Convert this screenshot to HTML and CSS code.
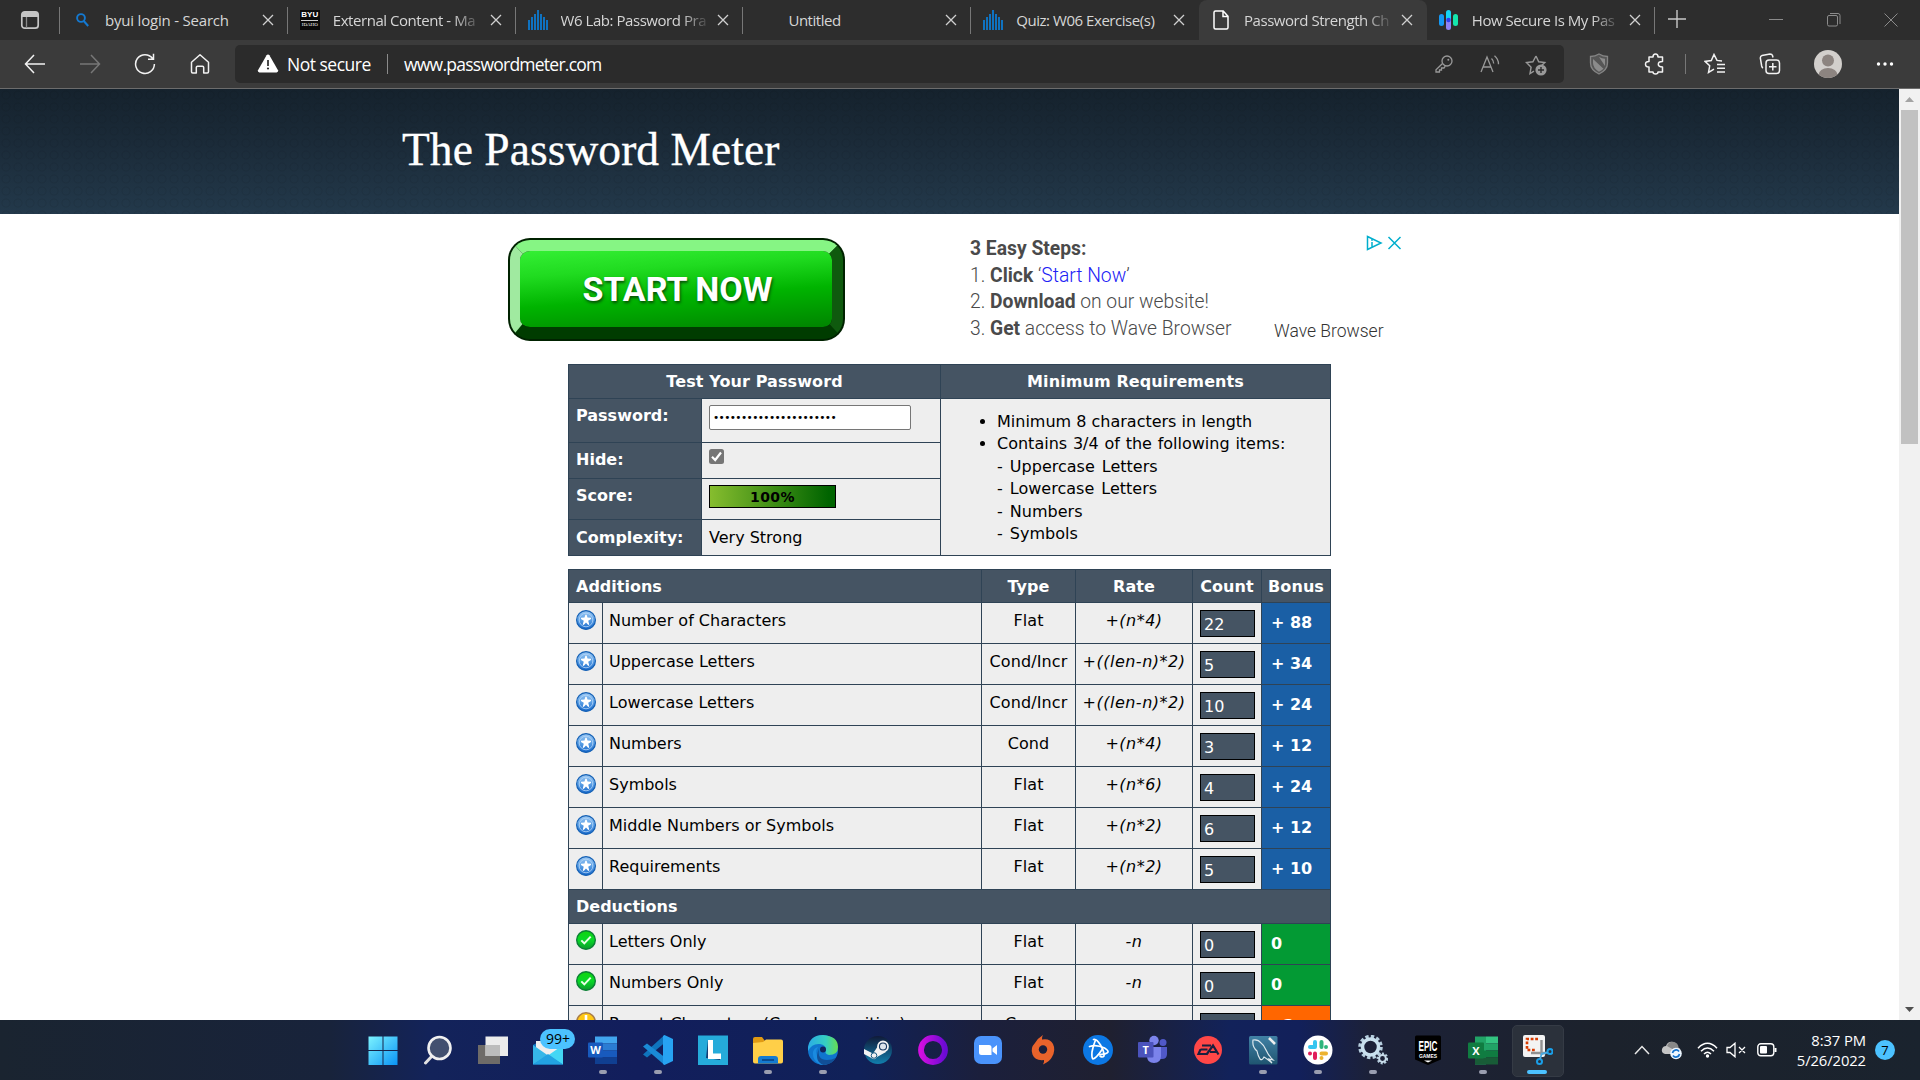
FILE: index.html
```html
<!DOCTYPE html>
<html lang="en">
<head>
<meta charset="utf-8">
<title>Password Strength Checker</title>
<link rel="stylesheet" href="styles.css">
</head>
<body>
<svg width="0" height="0" class="defs">
  <defs>
    <linearGradient id="blueBall" x1="0" y1="0" x2="0" y2="1"><stop offset="0" stop-color="#9cc8f2"/><stop offset=".5" stop-color="#5ba0e6"/><stop offset="1" stop-color="#1465c8"/></linearGradient>
    <linearGradient id="greenBall" x1="0" y1="0" x2="0" y2="1"><stop offset="0" stop-color="#0fd40f"/><stop offset=".5" stop-color="#08d828"/><stop offset="1" stop-color="#0a9a2c"/></linearGradient>
    <symbol id="star" viewBox="0 0 20 20"><circle cx="10" cy="10" r="9.4" fill="url(#blueBall)" stroke="#1460b4" stroke-width="1.2"/><circle cx="10" cy="10" r="6.800" fill="none" stroke="#b4d6f8" stroke-width="1" opacity=".8"/><path d="M9.400 4.800h1.200l.9 2.700 3.500.3v1.200l-2.800 1.700 1.100 3.800-1 .5-2.300-2.500-2.300 2.500-1-.5 1.100-3.800L5 9V7.800l3.500-.3z" fill="#fff"/></symbol>
    <symbol id="check" viewBox="0 0 20 20"><circle cx="10" cy="10" r="9.3" fill="url(#greenBall)" stroke="#0b7f35" stroke-width="1.4"/><path d="M5.3 10.4l3 3 6.4-6.8" fill="none" stroke="#e6ffe6" stroke-width="2"/></symbol>
    <symbol id="x" viewBox="0 0 12 12"><path d="M1 1l10 10M11 1L1 11" stroke="#d0d0d0" stroke-width="1.3" fill="none"/></symbol>
    <symbol id="bars" viewBox="0 0 20 20"><path d="M0 10h2v10H0zM3 7h2v13H3zM6 4h2v16H6zM9 0h2v20H9zM12 4h2v16h-2zM15 7h2v13h-2zM18 10h2v10h-2z" fill="#0f72c0"/></symbol>
  </defs>
</svg>

<div class="tabs">
  <div class="tab-menu"><svg width="20" height="20" viewBox="0 0 20 20"><rect x="1.8" y="1.8" width="16.4" height="16.4" rx="3" fill="none" stroke="#c6c6c6" stroke-width="1.7"/><path d="M2 2h16v5H2z" fill="#c6c6c6"/><path d="M6.5 7v11" stroke="#8c8c8c" stroke-width="1.3"/></svg></div>
  <div class="tab"><span class="fav"><svg width="13" height="14" viewBox="0 0 13 14"><circle cx="5" cy="5" r="3.9" fill="none" stroke="#1479d1" stroke-width="1.9"/><path d="M7.8 8l4.4 5" stroke="#1479d1" stroke-width="2"/></svg></span><span class="title loose">byui login - Search</span><svg class="close"><use href="#x"/></svg></div>
  <div class="tab"><span class="fav"><span class="byu"><b>BYU</b><i>IDAHO</i></span></span><span class="title fade">External Content - Ma</span><svg class="close"><use href="#x"/></svg></div>
  <div class="tab"><span class="fav"><svg width="20" height="20"><use href="#bars"/></svg></span><span class="title fade">W6 Lab: Password Pra</span><svg class="close"><use href="#x"/></svg></div>
  <div class="tab"><span class="fav"></span><span class="title">Untitled</span><svg class="close"><use href="#x"/></svg></div>
  <div class="tab last"><span class="fav"><svg width="20" height="20"><use href="#bars"/></svg></span><span class="title">Quiz: W06 Exercise(s)</span><svg class="close"><use href="#x"/></svg></div>
  <div class="tab active"><span class="fav"><svg width="16" height="20" viewBox="0 0 16 20"><path d="M2.5 1h7.7L15 6.3v11.2a1.5 1.5 0 0 1-1.5 1.5h-11A1.5 1.5 0 0 1 1 17.500V2.500A1.500 1.500 0 0 1 2.500 1zM10 1v5.500h5" fill="none" stroke="#fff" stroke-width="1.500"/></svg></span><span class="title fade">Password Strength Ch</span><svg class="close"><use href="#x"/></svg></div>
  <div class="tab"><span class="fav"><svg width="19" height="20" viewBox="0 0 19 20"><rect x="0" y="4" width="5" height="12" rx="2.500" fill="#1499f5"/><rect x="7" y="0" width="5" height="12" rx="2.500" fill="#14d4f5"/><rect x="7" y="8" width="5" height="12" rx="2.500" fill="#8c82f5"/><circle cx="9.500" cy="10" r="2.200" fill="#2b3ff0"/><rect x="14" y="4" width="5" height="12" rx="2.500" fill="#14e6ae"/></svg></span><span class="title fade">How Secure Is My Pas</span><svg class="close"><use href="#x"/></svg></div>
  <svg class="plus" width="18" height="18" viewBox="0 0 18 18"><path d="M9 0v18M0 9h18" stroke="#c8c8c8" stroke-width="1.400"/></svg>
  <div class="win">
    <svg width="14" height="14" viewBox="0 0 14 14"><path d="M0 6.500h14" stroke="#8b8b8b"/></svg>
    <svg width="14" height="14" viewBox="0 0 14 14"><rect x=".5" y="2.500" width="10" height="10.500" rx="1.500" fill="none" stroke="#8b8b8b"/><path d="M3 .5h8a2 2 0 0 1 2 2v8.500" fill="none" stroke="#8b8b8b"/></svg>
    <svg width="14" height="14" viewBox="0 0 14 14"><path d="M.5.5l13 13M13.500.5l-13 13" stroke="#8b8b8b"/></svg>
  </div>
</div>

<div class="toolbar">
  <div class="nav">
    <svg width="22" height="22" viewBox="0 0 22 22"><path d="M10 2l-8.500 9L10 20M1.500 11H21" fill="none" stroke="#f2f2f2" stroke-width="1.500"/></svg>
    <svg width="22" height="22" viewBox="0 0 22 22"><path d="M12 2l8.500 9L12 20M20.500 11H1" fill="none" stroke="#777" stroke-width="1.500"/></svg>
    <svg width="22" height="22" viewBox="0 0 22 22"><path d="M18.600 5.500A9.400 9.400 0 1 0 20.400 11M19.500.8v5.400h-5.500" fill="none" stroke="#f2f2f2" stroke-width="1.500"/></svg>
    <svg width="22" height="22" viewBox="0 0 22 22"><path d="M2.500 9.200L11 1.800l8.500 7.400v9.600q0 1.200-1.200 1.200h-3.600v-5.600q0-1.200-1.200-1.200h-5q-1.200 0-1.200 1.200V20H3.700q-1.200 0-1.200-1.200z" fill="none" stroke="#f2f2f2" stroke-width="1.500" stroke-linejoin="round"/></svg>
  </div>
  <div class="address">
    <svg class="warn" width="22" height="19" viewBox="0 0 22 19"><path d="M11 .5q.9 0 1.400.8l8.600 15q.5 2-1.400 2.200H2.400Q.5 18.300 1 16.300l8.600-15Q10.100.5 11 .5z" fill="#fff"/><path d="M11 6v6" stroke="#2b2b2b" stroke-width="1.700"/><circle cx="11" cy="14.500" r="1.100" fill="#2b2b2b"/></svg>
    <span class="secure">Not secure</span><span class="bar"></span><span class="url">www.passwordmeter.com</span>
    <span class="grow"></span>
    <svg class="key" width="18" height="18" viewBox="0 0 18 18"><circle cx="12" cy="6" r="5" fill="none" stroke="#999" stroke-width="1.300"/><circle cx="13.300" cy="4.700" r="1" fill="#999"/><path d="M7.500 8.500L1 14.800V17h3.500v-2h2v-2H9l1.300-1.800" fill="none" stroke="#999" stroke-width="1.300"/></svg>
    <svg class="read" width="20" height="18" viewBox="0 0 20 18"><path d="M1 17L7 2l6 15M3 12h8M11.500 3.500q2.200 2 2.200 5M14.500.8q4 3.400 4 8.400" fill="none" stroke="#999" stroke-width="1.300"/></svg>
    <svg class="fave" width="22" height="22" viewBox="0 0 22 22"><path d="M11 2l2.700 5.800 6.100.8-4.500 4.200M9 17.200L5 19.600l1.100-6.400L1.500 8.600l6.400-.8L11 2" fill="none" stroke="#999" stroke-width="1.400"/><circle cx="16" cy="16" r="5.600" fill="#999"/><path d="M16 13v6M13 16h6" stroke="#2b2b2b" stroke-width="1.400"/></svg>
  </div>
  <div class="tools">
    <svg width="20" height="22" viewBox="0 0 20 22"><path d="M10 1q4 2.500 8.500 2.500V10q0 7-8.500 11Q1.500 17 1.500 10V3.500Q6 3.500 10 1z" fill="#565656" stroke="#858585" stroke-width="1.300"/><path d="M10 4q3 1.500 6 1.800V13zM4 6l10.500 9.800Q13 17.500 10 18.800 4 15 4 10z" fill="#8b8b8b"/></svg>
    <svg class="puzzle" width="22" height="22" viewBox="0 0 22 22"><path d="M5 4h4q0-3 2.500-3T14 4h4.500v4.500q-4.200 0-4.200 2.700t4.200 2.700V19H14q0 2-2.500 2T9 19H5v-5q-3.500 0-3.500-2.800T5 8.500z" transform="translate(1)" fill="none" stroke="#f2f2f2" stroke-width="1.500" stroke-linejoin="round"/></svg>
    <i class="sep"></i>
    <svg class="favs" width="22" height="22" viewBox="0 0 22 22"><path d="M18 8l-5-.6-3-5.900-2.700 6-6.300.9 4.700 4.400-1.200 6.700 5.500-3.300M13 11.500h8M13 15.200h8M13 19h8" fill="none" stroke="#f2f2f2" stroke-width="1.500"/></svg>
    <svg class="coll" width="22" height="22" viewBox="0 0 22 22"><rect x="7" y="7" width="13.500" height="13.500" rx="3" fill="none" stroke="#f2f2f2" stroke-width="1.500"/><path d="M13.800 10v7.500M10 13.800h7.500M4 15q-1-.5-1.300-2L1.300 5Q1.300 3 3 2.500l8-1.500q2 0 2.500 1.500l.5 2" fill="none" stroke="#f2f2f2" stroke-width="1.500"/></svg>
    <svg class="coll" width="28" height="28" viewBox="0 0 28 28"><clipPath id="av"><circle cx="14" cy="14" r="14"/></clipPath><g clip-path="url(#av)"><path d="M0 0h28v28H0z" fill="#d2cfcc"/><circle cx="14" cy="10.500" r="6" fill="#8c8480"/><ellipse cx="14" cy="25" rx="9.500" ry="7" fill="#8c8480"/></g></svg>
    <svg width="18" height="4" viewBox="0 0 18 4"><circle cx="2.500" cy="2" r="1.700" fill="#fff"/><circle cx="9" cy="2" r="1.700" fill="#fff"/><circle cx="15.500" cy="2" r="1.700" fill="#fff"/></svg>
  </div>
</div>

<div class="viewport">
  <div class="page">
    <header class="masthead"><h1>The Password Meter</h1></header>
    <div class="ad">
      <div class="start"><div class="start-face">START NOW</div></div>
      <div class="steps"><p><b>3 Easy Steps:</b></p><p>1. <b>Click</b> ‘<a>Start Now</a>’</p><p>2. <b>Download</b> on our website!</p><p>3. <b>Get</b> access to Wave Browser</p></div>
      <div class="brand"><svg width="36" height="16" viewBox="0 0 36 16"><path d="M1.500 1.500L15 8 1.500 14.500zM6 7v5.500" fill="none" stroke="#00aecd" stroke-width="1.500"/><circle cx="6" cy="5" r=".9" fill="#00aecd"/><path d="M22.500 2l12 12M34.500 2l-12 12" stroke="#00aecd" stroke-width="1.500"/></svg><span>Wave Browser</span></div>
    </div>

    <table class="meter test">
      <colgroup><col class="c133"><col class="c239"><col class="c390"></colgroup>
      <tr class="r34"><th colspan="2" class="mid">Test Your Password</th><th class="mid">Minimum Requirements</th></tr>
      <tr class="r44"><th>Password:</th><td><div class="pwd">••••••••••••••••••••••</div></td>
        <td rowspan="4" class="reqs"><ul><li>Minimum 8 characters in length</li><li class="wide">Contains 3/4 of the following items:<div class="sub">- Uppercase Letters<br>- Lowercase Letters<br>- Numbers<br>- Symbols</div></li></ul></td></tr>
      <tr class="r36"><th>Hide:</th><td><svg class="box" width="15" height="15" viewBox="0 0 15 15"><rect width="15" height="15" rx="2.500" fill="#767676"/><path d="M3 7.800l3.200 3.200 5.800-7.500" fill="none" stroke="#fff" stroke-width="2.200"/></svg></td></tr>
      <tr class="r41"><th>Score:</th><td><div class="score">100%</div></td></tr>
      <tr class="r36 complexity"><th>Complexity:</th><td>Very Strong</td></tr>
    </table>

    <table class="meter rates">
      <colgroup><col class="c34"><col class="c379"><col class="c94"><col class="c117"><col class="c69"><col class="c69"></colgroup>
      <tr class="r33"><th colspan="2">Additions</th><th class="mid">Type</th><th class="mid">Rate</th><th class="mid">Count</th><th class="mid">Bonus</th></tr>
      <tr class="r41"><td class="icon"><svg class="ball"><use href="#star"/></svg></td><td>Number of Characters</td><td class="mid">Flat</td><td class="mid em">+(n*4)</td><td><div class="count">22</div></td><td class="bonus blue">+ 88</td></tr>
      <tr class="r41"><td class="icon"><svg class="ball"><use href="#star"/></svg></td><td>Uppercase Letters</td><td class="mid">Cond/Incr</td><td class="mid em">+((len-n)*2)</td><td><div class="count">5</div></td><td class="bonus blue">+ 34</td></tr>
      <tr class="r41"><td class="icon"><svg class="ball"><use href="#star"/></svg></td><td>Lowercase Letters</td><td class="mid">Cond/Incr</td><td class="mid em">+((len-n)*2)</td><td><div class="count">10</div></td><td class="bonus blue">+ 24</td></tr>
      <tr class="r41"><td class="icon"><svg class="ball"><use href="#star"/></svg></td><td>Numbers</td><td class="mid">Cond</td><td class="mid em">+(n*4)</td><td><div class="count">3</div></td><td class="bonus blue">+ 12</td></tr>
      <tr class="r41"><td class="icon"><svg class="ball"><use href="#star"/></svg></td><td>Symbols</td><td class="mid">Flat</td><td class="mid em">+(n*6)</td><td><div class="count">4</div></td><td class="bonus blue">+ 24</td></tr>
      <tr class="r41"><td class="icon"><svg class="ball"><use href="#star"/></svg></td><td>Middle Numbers or Symbols</td><td class="mid">Flat</td><td class="mid em">+(n*2)</td><td><div class="count">6</div></td><td class="bonus blue">+ 12</td></tr>
      <tr class="r41"><td class="icon"><svg class="ball"><use href="#star"/></svg></td><td>Requirements</td><td class="mid">Flat</td><td class="mid em">+(n*2)</td><td><div class="count">5</div></td><td class="bonus blue">+ 10</td></tr>
      <tr class="r34"><th colspan="6">Deductions</th></tr>
      <tr class="r41 ded"><td class="icon"><svg class="ball"><use href="#check"/></svg></td><td>Letters Only</td><td class="mid">Flat</td><td class="mid em">-n</td><td><div class="count">0</div></td><td class="bonus green">0</td></tr>
      <tr class="r41 ded"><td class="icon"><svg class="ball"><use href="#check"/></svg></td><td>Numbers Only</td><td class="mid">Flat</td><td class="mid em">-n</td><td><div class="count">0</div></td><td class="bonus green">0</td></tr>
      <tr class="r41 ded"><td class="icon"><svg class="ball" viewBox="0 0 20 20"><circle cx="10" cy="10" r="9.200" fill="#ffc814" stroke="#a87c48" stroke-width="1.600"/><path d="M10 3v8" stroke="#fff" stroke-width="2.600"/></svg></td><td>Repeat Characters (Case Insensitive)</td><td class="mid">Comp</td><td class="mid em">-</td><td><div class="count">2</div></td><td class="bonus orange">- 2</td></tr>
    </table>
  </div>
  <div class="scroll">
    <svg width="21" height="21" viewBox="0 0 21 21"><path d="M10.500 8l4.500 5H6z" fill="#a3a3a3"/></svg>
    <div class="thumb"></div>
    <svg width="21" height="21" viewBox="0 0 21 21"><path d="M10.500 13l4.500-5H6z" fill="#505050"/></svg>
  </div>
</div>

<div class="taskbar">
  <div class="apps">
    <div class="app"><svg viewBox="0 0 30 30"><defs><linearGradient id="wn" x1="0" y1="0" x2="1" y2="1"><stop offset="0" stop-color="#7cf3ff"/><stop offset="1" stop-color="#0a93f5"/></linearGradient></defs><path d="M.5 1.500h14v13.500H.5zM15.500 1.500h14v13.500h-14zM.5 16h14v14H.5zM15.500 16h14v14h-14z" fill="url(#wn)"/></svg></div>
    <div class="app"><svg viewBox="0 0 30 30"><path d="M10 20L2.500 28" stroke="#e2e2e2" stroke-width="3" stroke-linecap="round"/><circle cx="16.500" cy="13" r="11" fill="#42506f" stroke="#f0f0f0" stroke-width="2.600"/></svg></div>
    <div class="app"><svg viewBox="0 0 30 30"><path d="M0 10h22v19H0z" fill="#6e6b68"/><path d="M7.500 1.500H30V21H7.500z" fill="#ececec"/><path d="M7.500 10H22v11H7.500z" fill="#bcbcbc"/></svg></div>
    <div class="app"><svg viewBox="0 0 30 30"><path d="M0 10l15-8 15 8v19.500H0z" fill="#1577c5"/><path d="M3 6h24v8l-12 9-12-9z" fill="#eee"/><path d="M0 10l15 10.500L0 29.500z" fill="#36b7e8"/><path d="M30 10L15 20.500 30 29.500z" fill="#44d7f5"/><path d="M0 29.500L15 19l15 10.500z" fill="#22a2e2"/></svg><span class="note">99+</span></div>
    <div class="app run"><svg viewBox="0 0 30 30"><path d="M7 1.500h22v7H7z" fill="#41a5ee"/><path d="M7 8.500h22v7H7z" fill="#2b7cd3"/><path d="M7 15.500h22v7H7z" fill="#185abd"/><path d="M7 22.500h22v6.500H7z" fill="#103f91"/><rect x="0" y="7.500" width="15" height="15" rx="1" fill="#185abd"/><text x="7.500" y="19" class="glyph" font-size="11">W</text></svg></div>
    <div class="app run"><svg viewBox="0 0 30 30"><path d="M21.500 0v8L4 22.500 0 19.500z" fill="#0f74bd"/><path d="M0 11.500l4-3L21.500 22v8z" fill="#1a8ad6"/><path d="M21.500 0L30 4v22l-8.500 4-1.500-1V1z" fill="#27a3f2"/></svg></div>
    <div class="app"><svg viewBox="0 0 30 30"><path d="M0 .5h30v29.500H0z" fill="#25abda"/><path d="M10 5l-2 18 14 2v-3L13 20z" fill="#123f75"/><path d="M10 5h5v13.500h8V24H10z" fill="#fff"/></svg></div>
    <div class="app run"><svg viewBox="0 0 30 30"><path d="M0 4q0-2 2-2h7l3 4v4H0z" fill="#e09a13"/><path d="M0 8l10-1 3-2.500h15q2 0 2 2v20q0 2-2 2H2q-2 0-2-2z" fill="#ffcf48"/><path d="M5 28.500V24q0-3 3-3h14q3 0 3 3v4.500z" fill="#147bd1"/><path d="M9 25h12" stroke="#0a4d92" stroke-width="2"/></svg></div>
    <div class="app run"><svg viewBox="0 0 30 30"><defs><linearGradient id="ed"><stop offset="0" stop-color="#2aabe6"/><stop offset=".6" stop-color="#36cfc0"/><stop offset="1" stop-color="#68de50"/></linearGradient></defs><circle cx="15" cy="15" r="15" fill="#0f75ce"/><path d="M0 12Q2 0 15 0q15 1 15 12 0 8-9 8-5-1-3-5 0-5-6-6Q4 8 0 16z" fill="url(#ed)"/><path d="M10 12q-4 6 1 12 6 6 15 0Q20 31 12 29.500 4 25 5 17q1-4 5-5z" fill="#1a8be0"/><path d="M11 14q-2 11 8 11 5 0 8.500-2-4 7-12 7-10-4-4.500-16z" fill="#114f97"/><circle cx="15" cy="14.500" r="3" fill="#12245c"/></svg></div>
    <div class="app"><svg viewBox="0 0 30 30"><defs><linearGradient id="st" x1="0" y1="0" x2="0" y2="1"><stop offset="0" stop-color="#101a38"/><stop offset="1" stop-color="#117fad"/></linearGradient></defs><circle cx="15" cy="15" r="14" fill="url(#st)"/><path d="M1 14l9 4.500 5-7.500 8 6-9 5Q12 26 7.500 22.500L1 19z" fill="#f2f2f2"/><circle cx="20" cy="11.500" r="5" fill="#14365e" stroke="#f2f2f2" stroke-width="1.800"/><circle cx="20" cy="11.500" r="3" fill="#dde5ec"/><circle cx="11" cy="20.500" r="2.800" fill="none" stroke="#14567e" stroke-width="1"/></svg></div>
    <div class="app"><svg viewBox="0 0 30 30"><defs><linearGradient id="ring"><stop offset="0" stop-color="#d20ee0"/><stop offset="1" stop-color="#6b0ad4"/></linearGradient></defs><circle cx="15" cy="15" r="12" fill="none" stroke="url(#ring)" stroke-width="5.800"/></svg></div>
    <div class="app"><svg viewBox="0 0 30 30"><rect x="1" y="1" width="28" height="28" rx="7" fill="#4a93fb"/><path d="M6 10h10q2.500 0 2.500 2.500V20H8.500Q6 20 6 17.500zM19.500 13.500L24 10v10l-4.500-3.500z" fill="#fff"/></svg></div>
    <div class="app"><svg viewBox="0 0 30 30"><path d="M15 0q-1.500 2.500-1 4.500Q22 3 25 9t-1 13q-2 4-9 7.500 1.500-2.500 1-4.500Q7 26 4.500 19.500T7 8q3-5 8-8z" fill="#e9632b"/><circle cx="15" cy="14.500" r="4.200" fill="#1a1f3b"/></svg></div>
    <div class="app"><svg viewBox="0 0 30 30"><circle cx="15" cy="15" r="15" fill="#0c78e4"/><g fill="none" stroke="#fff" stroke-width="1.700" stroke-linejoin="round" stroke-linecap="round"><path d="M6.500 11.500q7-2.500 15 1.500 4 2.500 3.500 4-1.500 2.500-9.500 2.500"/><path d="M10.500 4.500q3-1 7 5.500 4 7 3.500 11-1.500 2-4 0"/><path d="M12.500 5q-2.500 6-3.500 12-.5 6 1 7 3-.5 9.500-10"/></g></svg></div>
    <div class="app"><svg viewBox="0 0 30 30"><circle cx="25" cy="7.500" r="3.500" fill="#5059c9"/><circle cx="16" cy="5.500" r="4.700" fill="#7b83eb"/><path d="M20 12h9v7q0 5-5 5h-4z" fill="#5059c9"/><path d="M9 12h14v9q0 7-7 7t-7-7z" fill="#7b83eb"/><rect x="0" y="7" width="15.500" height="15.500" rx="1" fill="#4b53bc"/><text x="7.800" y="19" class="glyph" font-size="11">T</text></svg></div>
    <div class="app"><svg viewBox="0 0 30 30"><circle cx="15" cy="15" r="14" fill="#ff4747"/><path d="M9 10.500h9M7.500 14.500h7M14 19H5.500l2-4.500M13.500 19.500l6.500-9 5.500 9M17 17h7.500" fill="none" stroke="#18203f" stroke-width="2.200"/></svg></div>
    <div class="app run"><svg viewBox="0 0 30 30"><defs><linearGradient id="my" x1="0" y1="0" x2="0" y2="1"><stop offset="0" stop-color="#4181a5"/><stop offset="1" stop-color="#1f5570"/></linearGradient></defs><rect x="1" y="1" width="28.500" height="28.500" rx="1.500" fill="url(#my)"/><path d="M5 5q5-1 8 3 3 2 5 7t7 10l-4-1 3 4q-6-5-8-6-2 4-4 2-2-3-3-8Q4 12 5 5z" fill="none" stroke="#dde8ee" stroke-width="1.200"/><path d="M21 3l6 6" stroke="#eee" stroke-width="2.600"/></svg></div>
    <div class="app run"><svg viewBox="0 0 30 30"><circle cx="15" cy="15" r="14.500" fill="#fff"/><g stroke-width="4" stroke-linecap="round"><path d="M12 7v5M7 12h5" stroke="#36c5f0"/><path d="M18.500 7v5M23 12v0" stroke="#2eb67d"/><path d="M18.500 18.500H23M18.500 23v0" stroke="#ecb22e"/><path d="M12 18.500V23M7 18.500v0" stroke="#e01e5a"/></g></svg></div>
    <div class="app run"><svg viewBox="0 0 30 30"><circle cx="12.500" cy="12" r="10.500" fill="none" stroke="#b7cfdf" stroke-width="3.500" stroke-dasharray="3.300 2.200"/><circle cx="12.500" cy="12" r="8" fill="none" stroke="#c9e0ee" stroke-width="3.500"/><circle cx="24.500" cy="23.500" r="4.700" fill="none" stroke="#b7cfdf" stroke-width="2.400" stroke-dasharray="2 1.500"/><circle cx="24.500" cy="23.500" r="3.400" fill="none" stroke="#c9dcea" stroke-width="2"/></svg></div>
    <div class="app"><svg viewBox="0 0 30 30"><path d="M2 2q0-1.500 1.500-1.500h23Q28 .5 28 2v22.500L15 30 2 24.500z" fill="#000"/><text x="15" y="16" class="epic" textLength="19" lengthAdjust="spacingAndGlyphs">EPIC</text><text x="15" y="23" class="epic small" textLength="18" lengthAdjust="spacingAndGlyphs">GAMES</text><path d="M11 25.500h8l-4 2z" fill="#fff"/></svg></div>
    <div class="app run"><svg viewBox="0 0 30 30"><path d="M7 1.500h11v28H7z" fill="#21a366"/><path d="M18 1.500h12v7H18z" fill="#33c481"/><path d="M18 8.500h12v7H18z" fill="#21a366"/><path d="M7 15.500h11v7H7z" fill="#107c41"/><path d="M18 15.500h12v7H18z" fill="#107c41"/><path d="M7 22.500h23v7H7z" fill="#185c37"/><rect x="0" y="7.500" width="16" height="16" rx="1" fill="#107c41"/><text x="8" y="19.500" class="glyph" font-size="11">X</text></svg></div>
    <div class="app on"><svg viewBox="0 0 30 30"><rect x="0" y="0" width="22" height="22" rx="2" fill="#f3f3f3"/><path d="M15 4H4v11h8" fill="none" stroke="#d83b01" stroke-width="2.600" stroke-dasharray="2.800 1.700"/><path d="M18.500 5v15M8 18h15" stroke="#929292" stroke-width="2.400"/><circle cx="16.500" cy="26.500" r="2.500" fill="none" stroke="#1a9fe8" stroke-width="2"/><circle cx="27" cy="16.500" r="2.500" fill="none" stroke="#1a9fe8" stroke-width="2"/><path d="M17 24l2-6M24.500 17.500L18 19" stroke="#4aa9df" stroke-width="1.800"/></svg></div>
  </div>
  <div class="tray">
    <svg width="16" height="10" viewBox="0 0 16 10"><path d="M1 9l7-7.500L15 9" fill="none" stroke="#e8e8e8" stroke-width="1.500"/></svg>
    <svg class="cloud" width="22" height="20" viewBox="0 0 22 20"><path d="M4 14q-4-1-3-5 1-3 4-3 2-5 7-4 4 1 4.500 5 3 1 3 4v3z" fill="#c4c4c4"/><path d="M6 6q2-5 7-4 4 1 4.500 5L13 10z" fill="#888"/><circle cx="15" cy="13.500" r="5.800" fill="#eef6ff"/><path d="M11.500 13a3.600 3.600 0 0 1 6.500-1.500M18.500 14a3.600 3.600 0 0 1-6.500 1.500" fill="none" stroke="#1371cc" stroke-width="1.700"/></svg>
    <svg class="wifi" width="21" height="16" viewBox="0 0 21 16"><path d="M1 6.200Q10.500-3.500 20 6.200M4 9.200q6.500-6.500 13 0M7 12q3.500-3.500 7 0" fill="none" stroke="#fff" stroke-width="1.500"/><circle cx="10.500" cy="14" r="1.700" fill="#fff"/></svg>
    <svg class="mute" width="20" height="16" viewBox="0 0 20 16"><path d="M1 5.500h3L9 1.200v13.600L4 10.500H1zM13 5l6 6M19 5l-6 6" fill="none" stroke="#fff" stroke-width="1.300"/></svg>
    <svg class="battery" width="20" height="14" viewBox="0 0 20 14"><rect x=".8" y=".8" width="16" height="12" rx="3" fill="none" stroke="#fff" stroke-width="1.400"/><rect x="3" y="3" width="7" height="7.600" rx="1" fill="#fff"/><path d="M18.500 5v4" stroke="#fff" stroke-width="2"/></svg>
  </div>
  <div class="clock"><span class="time">8:37 PM</span><span class="date">5/26/2022</span></div>
  <div class="seven">7</div>
</div>
</body>
</html>
```
FILE: styles.css
```css
* { box-sizing: border-box; }
body { margin: 0; width: 1920px; height: 1080px; overflow: hidden; display: flex; flex-direction: column; font-family: "Open Sans", "Noto Sans", sans-serif; background: #fff; }
p, h1, ul { margin: 0; padding: 0; }
svg { display: block; flex: none; }
.defs { position: absolute; }

.tabs { height: 40px; flex: none; background: #2d2d2d; display: flex; color: #d6d6d6; font-size: 15px; }
.tab-menu { width: 60px; flex: none; display: flex; align-items: center; justify-content: center; border-right: 1px solid transparent; border-image: linear-gradient(transparent 8px, #777 8px, #777 33px, transparent 33px) 1; }
.tab { width: 227.800px; flex: none; display: flex; align-items: center; padding: 0 13px 1px 9px; border-right: 1px solid transparent; border-image: linear-gradient(transparent 8px, #777 8px, #777 33px, transparent 33px) 1; }
.tab.last { border-image: none; }
.tab.active { background: #3b3b3b; border-radius: 8px 8px 0 0; border-image: none; }
.fav { width: 26px; height: 20px; display: flex; align-items: center; justify-content: center; margin-right: 10px; flex: none; }
.title { width: 148px; flex: none; white-space: nowrap; overflow: hidden; line-height: 22px; letter-spacing: -.45px; }
.title.loose { letter-spacing: -.2px; }
.fade { -webkit-mask-image: linear-gradient(90deg, #000 120px, transparent 150px); mask-image: linear-gradient(90deg, #000 120px, transparent 150px); }
.close { width: 12px; height: 12px; margin-left: auto; }
.byu { width: 20px; height: 20px; background: #0a0a0a; display: flex; flex-direction: column; align-items: center; color: #fff; line-height: 8px; }
.byu b { font: 900 8px/10px "Liberation Sans", sans-serif; border-bottom: 1px solid #ccc; }
.byu i { font: 5px/8px "Liberation Serif", serif; }
.plus { margin: 10px 0 0 13px; }
.win { margin: 13px 22px 0 auto; display: flex; gap: 43.500px; }

.toolbar { height: 49px; flex: none; background: #3b3b3b; border-bottom: 1px solid #6c6c6c; display: flex; align-items: center; color: #fff; padding-bottom: 1px; }
.nav { width: 235px; padding-left: 24px; display: flex; gap: 33px; }
.address { width: 1329px; height: 38px; border-radius: 5px; background: #2b2b2b; display: flex; align-items: center; font-size: 17.500px; padding-left: 22px; }
.secure { margin-left: 8px; width: 85px; letter-spacing: -.5px; white-space: nowrap; }
.bar { width: 1px; height: 20px; background: #8b8b8b; margin: 0 16px 0 15px; }
.url { letter-spacing: -.75px; }
.grow { flex: 1; }
.read { margin-left: 27px; }
.fave { margin: 3px 17px 0 25px; }
.tools { flex: 1; display: flex; align-items: center; padding: 0 26px 0 25px; justify-content: space-between; }
.puzzle { margin: 0 -2px 0 2px; }
.favs { margin: 0 3px 0 -3px; }
.coll { margin: 0 2px 0 -2px; }
.sep { width: 1px; height: 20px; background: #777; margin: 0 -11px; }

.viewport { height: 931px; flex: none; display: flex; overflow: hidden; }
.page { width: 1899px; height: 931px; overflow: hidden; }
.masthead { height: 125px; padding: 34px 0 0 402px; background: radial-gradient(circle at 50% 50%, transparent 3px, rgba(0,0,0,.07) 4px, transparent 5px) 0 0 / 12px 12px, linear-gradient(#15222d, #1b2b39 45%, #23394b); }
h1 { font: 400 45.500px/54px "Liberation Serif", serif; color: #fff; letter-spacing: .05px; white-space: nowrap; -webkit-text-stroke: .3px #fff; }
.ad { height: 150px; padding: 24px 0 0 508px; display: flex; font-family: Roboto, sans-serif; color: #4a4a4a; }
.start { width: 337px; height: 103px; flex: none; border-radius: 22px; padding: 2px; background: #020; }
.start-face { height: 100%; border-style: solid; border-width: 11px 11px 12px 10px; border-color: #86f584 #0f5a0e #003c00 #a0eaa0; border-radius: 20px; background: linear-gradient(176deg, #34ef34 0, #20db20 27%, #00b400 58%, #008400 100%) padding-box; display: flex; align-items: center; justify-content: center; color: #fff; font-weight: 700; font-size: 34px; letter-spacing: .05px; padding: 0 0 1px 3px; text-shadow: 1px 2px 3px #064e06; }
.steps { width: 304px; flex: none; margin: -2px 0 0 125px; font-size: 19.300px; line-height: 26.500px; font-weight: 300; white-space: nowrap; }
.steps a { color: #2121f5; }
.steps b { font-weight: 700; }
.brand { width: 128px; flex: none; font-size: 17.500px; display: flex; flex-direction: column; justify-content: space-between; height: 106px; margin-top: -3px; }
.brand svg { align-self: flex-end; }
.brand span { font-weight: 300; color: #333; white-space: nowrap; }

.meter { border-collapse: collapse; table-layout: fixed; width: 763px; margin-left: 568px; font: 16px/22.400px "DejaVu Sans", sans-serif; color: #000; background: #eee; }
.meter th, .meter td { border: 1px solid #2f4355; padding: 6.500px 6px 0 6px; vertical-align: top; text-align: left; white-space: nowrap; overflow: hidden; }
.meter th { background: #455463; color: #fff; font-weight: 700; padding: 6px 0 0 7px; letter-spacing: 0; }
.meter .mid { text-align: center; padding-left: 0; padding-right: 0; letter-spacing: .1px; }
.meter .em { font-style: italic; letter-spacing: .5px; }
.meter.test td { padding: 6px 0 0 7px; }
.meter tr.complexity td, .meter tr.complexity th { padding-top: 7px; }
.rates { margin-top: 13px; }
.c133 { width: 133px; } .c239 { width: 239px; } .c390 { width: 390px; }
.c34 { width: 34px; } .c379 { width: 379px; } .c94 { width: 94px; } .c117 { width: 117px; } .c69 { width: 69px; }
.r33 { height: 33px; } .r34 { height: 34px; } .r36 { height: 36px; } .r41 { height: 41px; } .r44 { height: 44px; }
.pwd { width: 202px; height: 25px; border: 1px solid #767676; border-radius: 2px; background: #fff; padding-left: 3px; font: 10.500px/22px "DejaVu Sans", sans-serif; letter-spacing: -.6px; }
.score { width: 127px; height: 23px; border: 1px solid #000; background: linear-gradient(90deg, #86bd2e, #006400 95%); font: 700 14px/22px "DejaVu Sans", sans-serif; letter-spacing: .4px; text-align: center; }
.meter.test td.reqs { padding: 12px 0 0 56px; }
.wide { word-spacing: .7px; }
.sub { word-spacing: 2px; }
.meter td.icon { padding: 7px 0 0 7px; }
.ball { width: 20px; height: 20px; }
.meter .ded td.icon { padding-top: 6px; }
.count { width: 55px; height: 27px; margin: .5px 0 0 1px; border: 1px solid #000; background: #455463; color: #fff; line-height: 27px; padding-left: 3px; }
.meter .bonus { color: #fff; font-weight: 700; padding: 9px 0 0 9px; }
.blue { background: #1a5fa5; } .green { background: #039a34; } .orange { background: #f60; }
.scroll { width: 21px; background: #f1f1f1; display: flex; flex-direction: column; }
.thumb { height: 334px; margin: 0 2px auto 2px; background: #c1c1c1; }

.taskbar { height: 60px; flex: none; display: flex; align-items: center; padding-left: 355.400px; color: #fff; background: linear-gradient(90deg, #1a2430 0, #18233b 330px, #13235a 430px, #121e5c 640px, #102158 860px, #1b1f3c 980px, #1f2030 1110px, #12225a 1230px, #12205a 1300px, #1c2138 1370px, #1c222c 1600px, #1a232e 100%); }
.apps { display: flex; }
.app { width: 55px; height: 60px; position: relative; display: flex; align-items: center; justify-content: center; }
.app svg { width: 30px; height: 30px; position: relative; }
.run::after { content: ""; position: absolute; bottom: 6px; left: 24px; width: 8px; height: 4px; border-radius: 2px; background: #9a9eb0; }
.on svg { z-index: 1; }
.on::before { content: ""; position: absolute; left: 2px; top: 5px; width: 50px; height: 50px; border-radius: 5px; background: #2b313b; border: 1px solid #353b45; }
.on::after { content: ""; position: absolute; bottom: 6px; left: 17px; width: 20px; height: 4px; border-radius: 2px; background: #4cc2ff; }
.note { position: absolute; left: 20px; top: 9px; width: 35px; height: 20px; border-radius: 10px; background: #4cc2ff; color: #000; font-size: 14px; line-height: 20px; text-align: center; }
.glyph { fill: #fff; font-family: "Open Sans", sans-serif; font-weight: 700; text-anchor: middle; }
.epic { fill: #fff; font: 700 15px "Liberation Sans", sans-serif; text-anchor: middle; }
.epic.small { font-size: 5.500px; }
.tray { margin-left: 68.600px; display: flex; align-items: center; }
.cloud { margin-left: 11px; }
.wifi { margin-left: 14px; }
.mute { margin-left: 8px; }
.battery { margin-left: 11px; }
.clock { width: 89px; display: flex; flex-direction: column; text-align: right; font-size: 14.800px; line-height: 20px; letter-spacing: -.1px; white-space: nowrap; }
.seven { width: 20px; height: 20px; margin-left: 9px; border-radius: 50%; background: #4cc2ff; color: #000; font-size: 13px; line-height: 20px; text-align: center; }
```
